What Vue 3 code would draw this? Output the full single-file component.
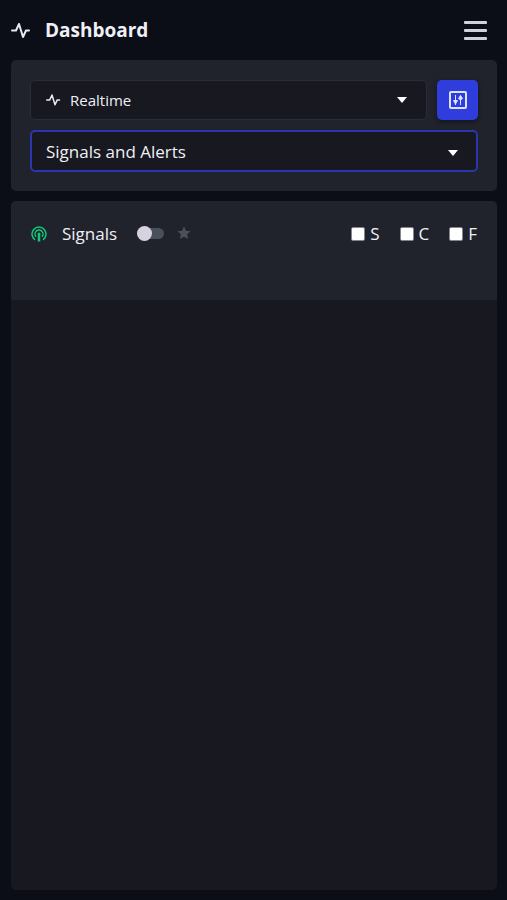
<script setup>
import { ref } from 'vue'

const mode = ref('Realtime')
const view = ref('Signals and Alerts')
const enabled = ref(false)
const filters = ref([
  { key: 'S', on: false },
  { key: 'C', on: false },
  { key: 'F', on: false },
])
</script>

<template>
  <div class="page">
    <header class="topbar">
      <svg class="pulse" viewBox="0 0 20 20" aria-hidden="true">
        <path d="M1 10.500H5L8 4L12 17L15 10.500H18" />
      </svg>
      <h1>Dashboard</h1>
      <button class="menu" type="button" aria-label="Menu">
        <span></span><span></span><span></span>
      </button>
    </header>

    <main class="content">
      <section class="controls">
        <div class="row">
          <div class="field">
            <svg class="pulse small" viewBox="0 0 20 20" aria-hidden="true">
              <path d="M1 10.500H5L8 4L12 17L15 10.500H18" />
            </svg>
            <select v-model="mode" class="with-icon" aria-label="Mode">
              <option>Realtime</option>
            </select>
            <svg class="caret" viewBox="0 0 10 6" aria-hidden="true"><path d="M0 0H10L5 6Z" /></svg>
          </div>
          <button class="settings" type="button" aria-label="Settings">
            <svg viewBox="0 0 18 18" aria-hidden="true">
              <rect x="1" y="1" width="16" height="16" rx="1" />
              <path d="M6.500 4V14M11.500 4V14" />
              <path class="knob" d="M4.500 9.500H8.500L6.500 13Z" />
              <path class="knob" d="M9.500 7.500L11.500 4.500L13.500 7.500L11.500 9Z" />
            </svg>
          </button>
        </div>
        <div class="field active">
          <select v-model="view" aria-label="View">
            <option>Signals and Alerts</option>
          </select>
          <svg class="caret" viewBox="0 0 10 6" aria-hidden="true"><path d="M0 0H10L5 6Z" /></svg>
        </div>
      </section>

      <section class="panel">
        <div class="panel-head">
          <svg class="signal" viewBox="0 0 16 16" aria-hidden="true">
            <path d="M4 13.800A7 7 0 1 1 12 13.800" />
            <path d="M5 10.700A4 4 0 1 1 11 10.700" />
            <circle cx="8" cy="8" r="1.500" />
            <path class="stem" d="M8 9V15.500" />
          </svg>
          <h2>Signals</h2>
          <input v-model="enabled" class="switch" type="checkbox" role="switch" aria-label="Signals" />
          <button class="star" type="button" aria-label="Favorite">
            <svg viewBox="0 0 14 14" aria-hidden="true">
              <path d="M7 .5L9 4.700L13.500 5.200L10.200 8.300L11 13L7 10.700L3 13L3.800 8.300L.5 5.200L5 4.700Z" />
            </svg>
          </button>
          <div class="filters">
            <label v-for="f in filters" :key="f.key">
              <input v-model="f.on" type="checkbox" class="box" />{{ f.key }}
            </label>
          </div>
        </div>
      </section>
    </main>
  </div>
</template>

<style>
body {
  background: #0b0d17;
}
</style>

<style scoped>
* {
  box-sizing: border-box;
}
.page {
  display: flex;
  flex-direction: column;
  min-height: 100vh;
  padding: 0 10px 10px 11px;
  background: #0b0d17;
  color: #eff0f6;
  font-family: "Open Sans", "Noto Sans", sans-serif;
}
.topbar {
  display: flex;
  align-items: center;
  height: 60px;
  padding-right: 10px;
}
h1,
h2 {
  margin: 0;
}
h1 {
  margin-left: 14px;
  font-size: 19px;
  font-weight: 700;
  line-height: 28px;
}
.pulse {
  width: 20px;
  height: 20px;
  fill: none;
  stroke: #e8eaf0;
  stroke-width: 2;
  stroke-linejoin: round;
  stroke-linecap: round;
}
button {
  padding: 0;
  border: 0;
  background: none;
  cursor: pointer;
}
.menu {
  display: flex;
  flex-direction: column;
  gap: 5px;
  width: 23px;
  margin-left: auto;
}
.menu span {
  height: 3px;
  border-radius: 1px;
  background: #d0d2da;
}
.content {
  display: flex;
  flex: 1;
  flex-direction: column;
  gap: 10px;
}
.controls {
  display: flex;
  flex-direction: column;
  gap: 10px;
  padding: 20px 19px 19px;
  border-radius: 5px;
  background: #20232c;
}
.row {
  display: flex;
  gap: 10px;
}
.field {
  position: relative;
  flex: 1;
}
select {
  display: block;
  width: 100%;
  height: 40px;
  padding: 0 40px 0 15px;
  border: 1px solid #2a2d37;
  border-radius: 5px;
  outline: 0;
  background: #171820;
  color: #eff0f6;
  font-family: inherit;
  font-size: 17px;
  appearance: none;
}
.with-icon {
  padding-left: 39px;
  font-size: 15px;
}
.active select {
  height: 42px;
  border: 2px solid #2c35ae;
  padding-left: 14px;
}
.small {
  position: absolute;
  top: 12px;
  left: 16px;
  width: 15px;
  height: 15px;
}
.caret {
  position: absolute;
  top: 17px;
  right: 20px;
  width: 10px;
  height: 6px;
  fill: #fff;
  pointer-events: none;
}
.active .caret {
  top: 20px;
}
.settings {
  display: grid;
  place-items: center;
  width: 41px;
  height: 40px;
  border-radius: 5px;
  background: #303ddd;
  box-shadow: 0 2px 4px #13151e;
}
.settings svg {
  width: 18px;
  height: 18px;
  fill: none;
  stroke: #dde0ff;
  stroke-width: 2;
}
.settings path {
  stroke-width: 1;
}
.settings .knob {
  fill: #dde0ff;
}
.panel {
  flex: 1;
  overflow: hidden;
  border-radius: 5px;
  background: #171820;
}
.panel-head {
  display: flex;
  align-items: flex-start;
  height: 99px;
  padding: 20px 20px 0;
  background: #20232c;
  line-height: 26px;
}
.signal {
  width: 16px;
  height: 16px;
  margin-top: 5px;
  fill: none;
  stroke: #12c878;
  stroke-width: 1.500;
}
.signal .stem {
  stroke-width: 2.500;
}
.signal circle {
  fill: #12c878;
  stroke: none;
}
h2 {
  margin-left: 15px;
  font-size: 17px;
  font-weight: 400;
}
.switch {
  display: flex;
  align-items: center;
  width: 27px;
  height: 11px;
  margin: 7px 0 0 20px;
  border-radius: 6px;
  background: #48505a;
  appearance: none;
  cursor: pointer;
}
.switch::before {
  width: 15px;
  height: 15px;
  flex: none;
  border-radius: 50%;
  background: #d4d3df;
  content: "";
}
.switch:checked::before {
  margin-left: auto;
}
.star {
  width: 14px;
  height: 14px;
  margin: 5px 0 0 13px;
}
.star svg {
  display: block;
  fill: #4a4f5a;
}
.filters {
  display: flex;
  gap: 20px;
  margin-left: auto;
  font-size: 17px;
  font-weight: 500;
}
label {
  display: flex;
  align-items: center;
  gap: 5px;
}
.box {
  width: 14px;
  height: 14px;
  margin: 0;
  border: 1px solid #85868b;
  border-radius: 2px;
  background: #fff;
  appearance: none;
}
.box:checked {
  background: #303ddd;
}
</style>
